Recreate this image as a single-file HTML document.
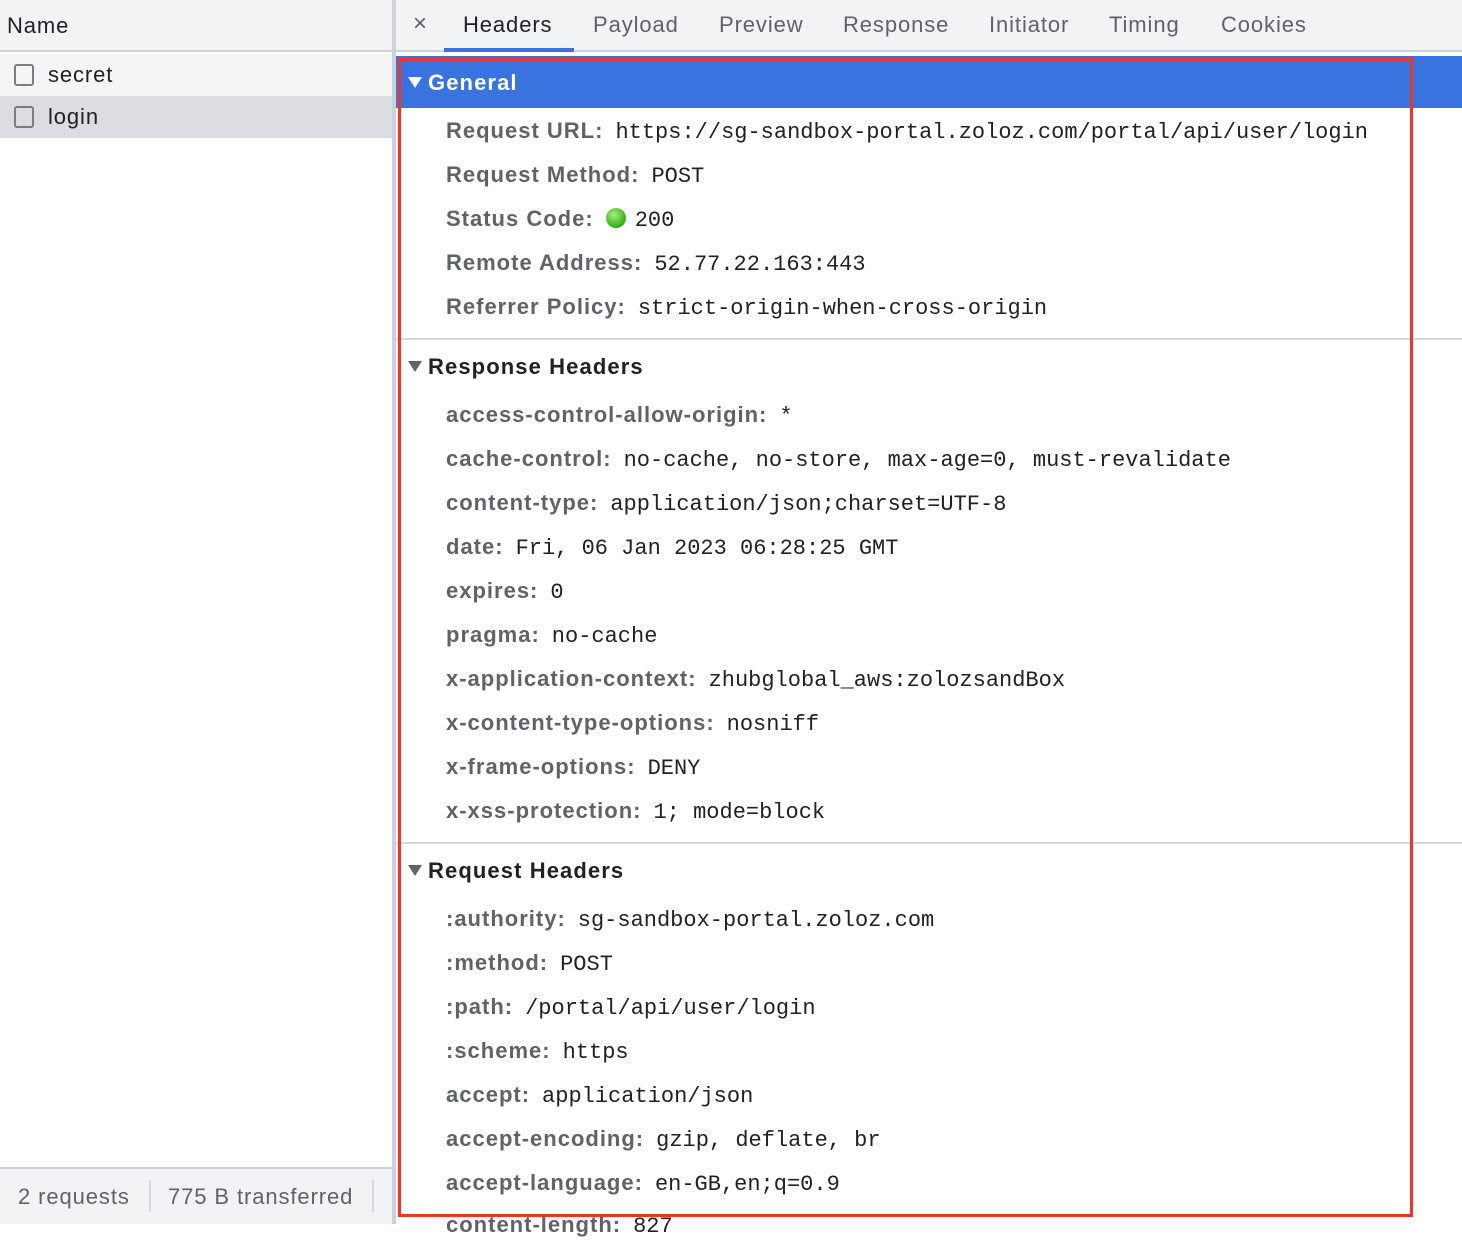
<!DOCTYPE html>
<html><head><meta charset="utf-8"><style>
*{margin:0;padding:0;box-sizing:border-box}
body{width:1462px;height:1224px;position:relative;overflow:hidden;background:#fff;font-family:"Liberation Sans",Arial,sans-serif;color:#202124;letter-spacing:0.9px}
.a{position:absolute;white-space:nowrap}
.l{font-size:22px;font-weight:bold;color:#5f6368;line-height:26px;letter-spacing:1px}
.m{font-family:"Liberation Mono",monospace;font-size:22px;color:#202124;font-weight:normal;letter-spacing:0;margin-left:12px}
.tab{font-size:22px;color:#5f6368;top:11px;line-height:28px}
.sec{font-size:22px;font-weight:bold;color:#202124;line-height:26px;letter-spacing:1.1px}
.tri{display:inline-block;width:0;height:0;border-left:7px solid transparent;border-right:7px solid transparent;border-top:11px solid #5f6368;margin-right:6px;vertical-align:2px}
.cb{position:absolute;width:20px;height:22px;border:2px solid #7a7d81;border-radius:3px;left:14px}
</style></head><body>
<div class="a" style="left:0;top:0;width:392px;height:52px;background:#f1f3f4;border-bottom:2px solid #cfd1d4"></div>
<div class="a" style="left:7px;top:13px;font-size:22px;color:#202124">Name</div>
<div class="a" style="left:0;top:54px;width:392px;height:42px;background:#f5f5f5"></div>
<div class="cb" style="top:64px"></div>
<div class="a" style="left:48px;top:62px;font-size:22px">secret</div>
<div class="a" style="left:0;top:96px;width:392px;height:42px;background:#dcdde0"></div>
<div class="cb" style="top:106px"></div>
<div class="a" style="left:48px;top:104px;font-size:22px">login</div>
<div class="a" style="left:0;top:1167px;width:392px;height:57px;background:#f1f3f4;border-top:2px solid #cfd1d4"></div>
<div class="a" style="left:18px;top:1184px;font-size:22px;color:#5f6368">2 requests</div>
<div class="a" style="left:149px;top:1180px;width:2px;height:32px;background:#d5d7da"></div>
<div class="a" style="left:168px;top:1184px;font-size:22px;color:#5f6368">775 B transferred</div>
<div class="a" style="left:372px;top:1180px;width:2px;height:32px;background:#d5d7da"></div>
<div class="a" style="left:392px;top:0;width:4px;height:1224px;background:#cfd1d4"></div>
<div class="a" style="left:396px;top:0;width:1066px;height:52px;background:#f1f3f4;border-bottom:2px solid #cfd1d4"></div>
<div class="a" style="left:413px;top:10px;font-size:24px;color:#5f6368">×</div>
<div class="a tab" style="left:463px;color:#202124">Headers</div>
<div class="a" style="left:444px;top:48px;width:130px;height:4px;background:#3a73e0"></div>
<div class="a tab" style="left:593px">Payload</div>
<div class="a tab" style="left:719px">Preview</div>
<div class="a tab" style="left:843px">Response</div>
<div class="a tab" style="left:989px">Initiator</div>
<div class="a tab" style="left:1109px">Timing</div>
<div class="a tab" style="left:1221px">Cookies</div>
<div class="a" style="left:396px;top:56px;width:1066px;height:52px;background:#3873e0"></div>
<div class="a sec" style="left:408px;top:70px;color:#fff"><span class="tri" style="border-top-color:#fff"></span>General</div>
<div class="a l" style="left:446px;top:118px">Request URL:<span class="m">https://sg-sandbox-portal.zoloz.com/portal/api/user/login</span></div>
<div class="a l" style="left:446px;top:162px">Request Method:<span class="m">POST</span></div>
<div class="a l" style="left:446px;top:206px">Status Code:<span style="display:inline-block;width:20px;height:20px;border-radius:50%;background:radial-gradient(circle at 40% 35%,#a8ee80,#3fb821 60%,#2c8f14);vertical-align:-2px;margin:0 3px 0 12px"></span><span class="m" style="margin-left:6px">200</span></div>
<div class="a l" style="left:446px;top:250px">Remote Address:<span class="m">52.77.22.163:443</span></div>
<div class="a l" style="left:446px;top:294px">Referrer Policy:<span class="m">strict-origin-when-cross-origin</span></div>
<div class="a" style="left:396px;top:338px;width:1066px;height:2px;background:#d5d7da"></div>
<div class="a sec" style="left:408px;top:354px"><span class="tri"></span>Response Headers</div>
<div class="a l" style="left:446px;top:402px">access-control-allow-origin:<span class="m">*</span></div>
<div class="a l" style="left:446px;top:446px">cache-control:<span class="m">no-cache, no-store, max-age=0, must-revalidate</span></div>
<div class="a l" style="left:446px;top:490px">content-type:<span class="m">application/json;charset=UTF-8</span></div>
<div class="a l" style="left:446px;top:534px">date:<span class="m">Fri, 06 Jan 2023 06:28:25 GMT</span></div>
<div class="a l" style="left:446px;top:578px">expires:<span class="m">0</span></div>
<div class="a l" style="left:446px;top:622px">pragma:<span class="m">no-cache</span></div>
<div class="a l" style="left:446px;top:666px">x-application-context:<span class="m">zhubglobal_aws:zolozsandBox</span></div>
<div class="a l" style="left:446px;top:710px">x-content-type-options:<span class="m">nosniff</span></div>
<div class="a l" style="left:446px;top:754px">x-frame-options:<span class="m">DENY</span></div>
<div class="a l" style="left:446px;top:798px">x-xss-protection:<span class="m">1; mode=block</span></div>
<div class="a" style="left:396px;top:842px;width:1066px;height:2px;background:#d5d7da"></div>
<div class="a sec" style="left:408px;top:858px"><span class="tri"></span>Request Headers</div>
<div class="a l" style="left:446px;top:906px">:authority:<span class="m">sg-sandbox-portal.zoloz.com</span></div>
<div class="a l" style="left:446px;top:950px">:method:<span class="m">POST</span></div>
<div class="a l" style="left:446px;top:994px">:path:<span class="m">/portal/api/user/login</span></div>
<div class="a l" style="left:446px;top:1038px">:scheme:<span class="m">https</span></div>
<div class="a l" style="left:446px;top:1082px">accept:<span class="m">application/json</span></div>
<div class="a l" style="left:446px;top:1126px">accept-encoding:<span class="m">gzip, deflate, br</span></div>
<div class="a l" style="left:446px;top:1170px">accept-language:<span class="m">en-GB,en;q=0.9</span></div>
<div class="a l" style="left:446px;top:1212px">content-length:<span class="m">827</span></div>
<div class="a" style="left:398px;top:58px;width:1015px;height:1159px;border:3px solid #e53a2a"></div>
</body></html>
